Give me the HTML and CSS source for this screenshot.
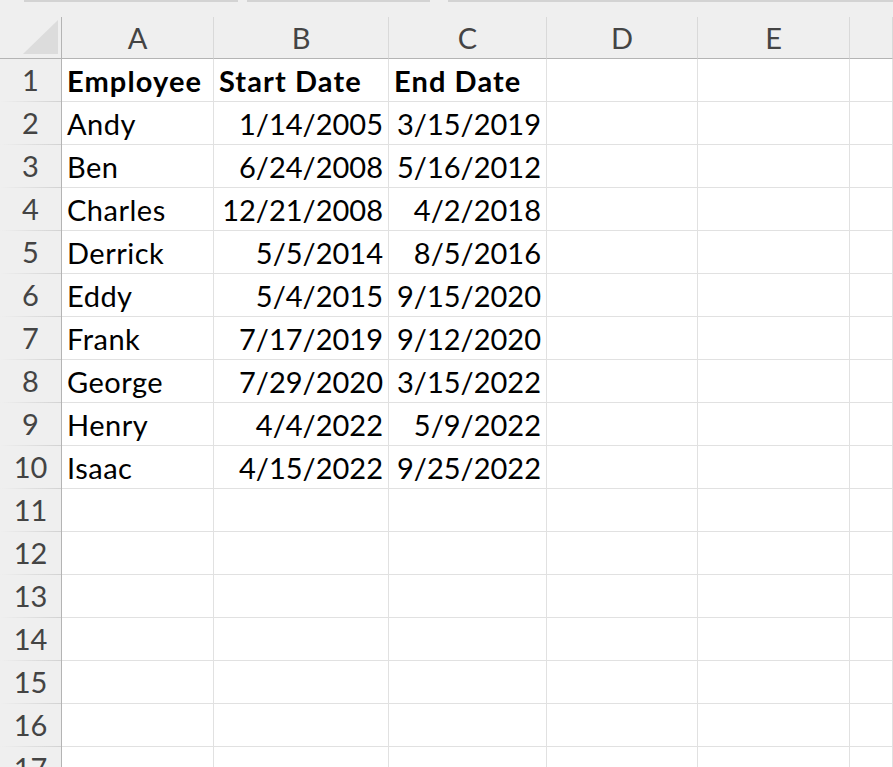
FILE: index.html
```html
<!DOCTYPE html>
<html lang="en">
<head>
    <meta charset="UTF-8">
    <title>Employees</title>
    <link rel="stylesheet" href="styles.css">
</head>
<body>
<div class="top-strip"></div>
<div class="sheet">
    <!-- column headers -->
    <div class="corner">
        <svg width="61" height="41" viewBox="0 0 61 41"><polygon points="23,37 58,3 58,37" fill="#dcdcdc"/></svg>
    </div>
    <div class="col-head">A</div>
    <div class="col-head">B</div>
    <div class="col-head">C</div>
    <div class="col-head">D</div>
    <div class="col-head">E</div>
    <div class="col-head"></div>

    <div class="row-head">1</div>
    <div class="cell bold">Employee</div>
    <div class="cell bold">Start Date</div>
    <div class="cell bold">End Date</div>
    <div class="cell"></div><div class="cell"></div><div class="cell"></div>

    <div class="row-head">2</div>
    <div class="cell">Andy</div>
    <div class="cell num">1/14/2005</div>
    <div class="cell num">3/15/2019</div>
    <div class="cell"></div><div class="cell"></div><div class="cell"></div>

    <div class="row-head">3</div>
    <div class="cell">Ben</div>
    <div class="cell num">6/24/2008</div>
    <div class="cell num">5/16/2012</div>
    <div class="cell"></div><div class="cell"></div><div class="cell"></div>

    <div class="row-head">4</div>
    <div class="cell">Charles</div>
    <div class="cell num">12/21/2008</div>
    <div class="cell num">4/2/2018</div>
    <div class="cell"></div><div class="cell"></div><div class="cell"></div>

    <div class="row-head">5</div>
    <div class="cell">Derrick</div>
    <div class="cell num">5/5/2014</div>
    <div class="cell num">8/5/2016</div>
    <div class="cell"></div><div class="cell"></div><div class="cell"></div>

    <div class="row-head">6</div>
    <div class="cell">Eddy</div>
    <div class="cell num">5/4/2015</div>
    <div class="cell num">9/15/2020</div>
    <div class="cell"></div><div class="cell"></div><div class="cell"></div>

    <div class="row-head">7</div>
    <div class="cell">Frank</div>
    <div class="cell num">7/17/2019</div>
    <div class="cell num">9/12/2020</div>
    <div class="cell"></div><div class="cell"></div><div class="cell"></div>

    <div class="row-head">8</div>
    <div class="cell">George</div>
    <div class="cell num">7/29/2020</div>
    <div class="cell num">3/15/2022</div>
    <div class="cell"></div><div class="cell"></div><div class="cell"></div>

    <div class="row-head">9</div>
    <div class="cell">Henry</div>
    <div class="cell num">4/4/2022</div>
    <div class="cell num">5/9/2022</div>
    <div class="cell"></div><div class="cell"></div><div class="cell"></div>

    <div class="row-head">10</div>
    <div class="cell">Isaac</div>
    <div class="cell num">4/15/2022</div>
    <div class="cell num">9/25/2022</div>
    <div class="cell"></div><div class="cell"></div><div class="cell"></div>

    <div class="row-head">11</div>
    <div class="cell"></div><div class="cell"></div><div class="cell"></div>
    <div class="cell"></div><div class="cell"></div><div class="cell"></div>

    <div class="row-head">12</div>
    <div class="cell"></div><div class="cell"></div><div class="cell"></div>
    <div class="cell"></div><div class="cell"></div><div class="cell"></div>

    <div class="row-head">13</div>
    <div class="cell"></div><div class="cell"></div><div class="cell"></div>
    <div class="cell"></div><div class="cell"></div><div class="cell"></div>

    <div class="row-head">14</div>
    <div class="cell"></div><div class="cell"></div><div class="cell"></div>
    <div class="cell"></div><div class="cell"></div><div class="cell"></div>

    <div class="row-head">15</div>
    <div class="cell"></div><div class="cell"></div><div class="cell"></div>
    <div class="cell"></div><div class="cell"></div><div class="cell"></div>

    <div class="row-head">16</div>
    <div class="cell"></div><div class="cell"></div><div class="cell"></div>
    <div class="cell"></div><div class="cell"></div><div class="cell"></div>

    <div class="row-head">17</div>
    <div class="cell"></div><div class="cell"></div><div class="cell"></div>
    <div class="cell"></div><div class="cell"></div><div class="cell"></div>
</div>
</body>
</html>
```

FILE: styles.css
```css
* {
    padding: 0;
    margin: 0;
    box-sizing: border-box;
}
body {
    font-family: "Lato", "Open Sans", sans-serif;
    font-size: 29px;
    background-color: white;
    overflow: hidden;
    height: 767px;
}
.top-strip {
    height: 17px;
    background:
        linear-gradient(to right,
            transparent 24px, #d3d3d3 24px, #d3d3d3 238px, transparent 238px,
            transparent 247px, #d3d3d3 247px, #d3d3d3 430px, transparent 430px,
            transparent 448px, #d3d3d3 448px) top / 100% 2px no-repeat,
        #efefef;
}
.sheet {
    display: grid;
    grid-template-columns: 62px 152px 175px 158px 151px 152px 1fr;
    grid-template-rows: 42px;
    grid-auto-rows: 43px;
}
.corner {
    background-color: #efefef;
    border-right: 1px solid #b4b4b4;
    border-bottom: 1px solid #b4b4b4;
    display: flex;
}
.col-head {
    background-color: #efefef;
    border-right: 1px solid #d9d9d9;
    border-bottom: 1px solid #b4b4b4;
    color: #444;
    text-align: center;
    line-height: 41px;
}
.row-head {
    background:
        linear-gradient(to right, #efefef, #d2d2d2) bottom / 100% 1px no-repeat,
        #efefef;
    border-right: 1px solid #b4b4b4;
    color: #444;
    text-align: center;
    line-height: 42px;
}
.cell {
    border-right: 1px solid #e1e1e1;
    border-bottom: 1px solid #e1e1e1;
    color: black;
    line-height: 42px;
    padding: 1px 5px 0 5px;
    letter-spacing: 0.5px;
    white-space: nowrap;
}
.bold {
    font-weight: bold;
    letter-spacing: 1.1px;
}
.num {
    letter-spacing: 0;
    text-align: right;
}
```
